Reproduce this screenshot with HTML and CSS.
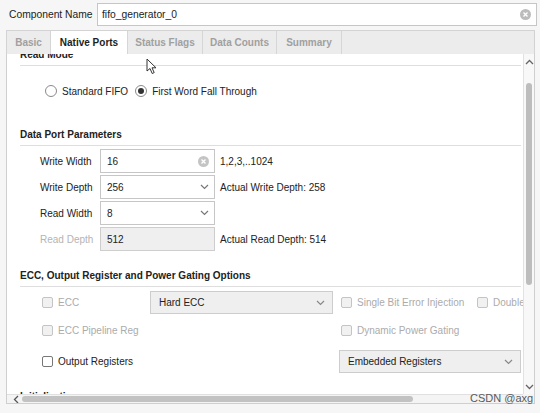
FILE: index.html
```html
<!DOCTYPE html>
<html>
<head>
<meta charset="utf-8">
<link rel="stylesheet" href="styles.css">
</head>
<body>
<div class="app">
  <div class="top">
    <span class="top-label">Component Name</span>
    <div class="field top-field">
      <span class="val">fifo_generator_0</span>
      <svg class="clear" width="11" height="11" viewBox="0 0 11 11"><circle cx="5.5" cy="5.5" r="5.5" fill="#bcbcbc"/><path d="M3.5 3.5 L7.5 7.5 M7.5 3.5 L3.5 7.5" stroke="#fff" stroke-width="1.4"/></svg>
    </div>
  </div>

  <div class="tabs">
    <div class="tab t1">Basic</div>
    <div class="tab t2 active">Native Ports</div>
    <div class="tab t3">Status Flags</div>
    <div class="tab t4">Data Counts</div>
    <div class="tab t5">Summary</div>
  </div>

  <div class="panel">
    <div class="view">
      <div class="content">
        <div class="sec-title">Read Mode</div>
        <div class="radios">
          <span class="radio"></span><span class="rlabel">Standard FIFO</span>
          <span class="radio on"></span><span class="rlabel">First Word Fall Through</span>
        </div>

        <div class="sec-title sec-gap">Data Port Parameters</div>
        <div class="params">
          <span class="plabel">Write Width</span>
          <div class="field pfield"><span class="val">16</span><svg class="clear" width="11" height="11" viewBox="0 0 11 11"><circle cx="5.5" cy="5.5" r="5.5" fill="#c4c4c4"/><path d="M3.5 3.5 L7.5 7.5 M7.5 3.5 L3.5 7.5" stroke="#fff" stroke-width="1.4"/></svg></div>
          <span class="hint">1,2,3,..1024</span>

          <span class="plabel">Write Depth</span>
          <div class="field pfield"><span class="val">256</span><svg class="chev" width="9" height="6" viewBox="0 0 9 6"><polyline points="1,1 4.5,4.5 8,1" fill="none" stroke="#777" stroke-width="1.2"/></svg></div>
          <span class="hint">Actual Write Depth: 258</span>

          <span class="plabel">Read Width</span>
          <div class="field pfield"><span class="val">8</span><svg class="chev" width="9" height="6" viewBox="0 0 9 6"><polyline points="1,1 4.5,4.5 8,1" fill="none" stroke="#777" stroke-width="1.2"/></svg></div>
          <span class="hint"></span>

          <span class="plabel disabled">Read Depth</span>
          <div class="field pfield gray"><span class="val">512</span></div>
          <span class="hint">Actual Read Depth: 514</span>
        </div>

        <div class="sec-title sec-gap2">ECC, Output Register and Power Gating Options</div>
        <div class="ecc">
          <div class="chk-item disabled"><span class="box"></span>ECC</div>
          <div class="field sel gray"><span class="val">Hard ECC</span><svg class="chev" width="9" height="6" viewBox="0 0 9 6"><polyline points="1,1 4.5,4.5 8,1" fill="none" stroke="#888" stroke-width="1.2"/></svg></div>
          <div class="chk-item disabled"><span class="box"></span>Single Bit Error Injection</div>
          <div class="chk-item disabled"><span class="box"></span>Double Bit Error Injection</div>

          <div class="chk-item disabled"><span class="box"></span>ECC Pipeline Reg</div>
          <div></div>
          <div class="chk-item disabled"><span class="box"></span>Dynamic Power Gating</div>
          <div></div>

          <div class="chk-item end"><span class="box"></span>Output Registers</div>
          <div></div>
          <div class="field sel sel2 gray end"><span class="val">Embedded Registers</span><svg class="chev" width="9" height="6" viewBox="0 0 9 6"><polyline points="1,1 4.5,4.5 8,1" fill="none" stroke="#888" stroke-width="1.2"/></svg></div>
          <div></div>
        </div>

        <div class="sec-title sec-gap3">Initialization</div>
      </div>
    </div>
    <div class="vscroll">
      <svg class="arrow" width="9" height="6" viewBox="0 0 9 6"><polyline points="1,5 4.5,1.5 8,5" fill="none" stroke="#666" stroke-width="1.3"/></svg>
      <div class="vthumb"></div>
      <svg class="arrow down" width="9" height="6" viewBox="0 0 9 6"><polyline points="1,1 4.5,4.5 8,1" fill="none" stroke="#666" stroke-width="1.3"/></svg>
    </div>
    <div class="hscroll">
      <svg class="harrow" width="6" height="9" viewBox="0 0 6 9"><polyline points="5,1 1.5,4.5 5,8" fill="none" stroke="#555" stroke-width="1.3"/></svg>
      <div class="hthumb"></div>
    </div>
    <div class="corner"></div>
  </div>

  <div class="watermark">CSDN @axg</div>
  <svg class="cursor" width="12" height="17" viewBox="0 0 12 17"><path d="M1 1 L1 13 L4 10.5 L6.2 15.5 L8.2 14.6 L6 9.8 L10 9.8 Z" fill="#fff" stroke="#333" stroke-width="1" stroke-linejoin="round"/></svg>
</div>
</body>
</html>
```

FILE: styles.css
```css
html, body {
  margin: 0;
  padding: 0;
}
body {
  width: 540px;
  height: 413px;
  overflow: hidden;
  background: #f6f6f6;
  font-family: "Liberation Sans", Arial, sans-serif;
  font-size: 10px;
  color: #222;
}
.app {
  position: relative;
  height: 413px;
}

/* top row */
.top {
  display: flex;
  align-items: center;
  padding: 3px 3px 0 9px;
  height: 22px;
}
.top-label {
  width: 88px;
  font-size: 10.3px;
  color: #222;
}
.field {
  display: flex;
  align-items: center;
  box-sizing: border-box;
  height: 22px;
  border: 1px solid #c6c6c6;
  background: #fff;
  padding: 0 5px 0 6px;
  white-space: nowrap;
}
.field .val {
  flex: 1;
}
.top-field {
  flex: 1;
  height: 23px;
  font-size: 10.3px;
  padding-left: 4px;
}
.clear {
  display: block;
  flex: none;
}
.chev {
  display: block;
  flex: none;
}

/* tabs */
.tabs {
  display: flex;
  margin: 5px 0 0 6px;
  width: 529px;
  height: 24px;
  box-sizing: border-box;
  background: #ececec;
  border: 1px solid #d3d3d3;
  border-bottom: none;
}
.tab {
  box-sizing: border-box;
  display: flex;
  align-items: center;
  justify-content: center;
  border-right: 1px solid #d6d6d6;
  font-weight: bold;
  color: #a0a0a0;
  white-space: nowrap;
}
.tab.active {
  background: #fff;
  color: #1e1e1e;
}
.t1 { width: 44px; }
.t2 { width: 77px; }
.t3 { width: 75px; }
.t4 { width: 74px; }
.t5 { width: 65px; }

/* panel */
.panel {
  margin-left: 6px;
  width: 529px;
  height: 350px;
  box-sizing: border-box;
  border: 1px solid #cfcfcf;
  border-top: none;
  background: #fff;
  display: grid;
  grid-template-columns: 1fr 11px;
  grid-template-rows: 340px 9px;
  overflow: hidden;
}
.view {
  overflow: hidden;
}
.content {
  margin-top: -6px;
  padding: 0 2px 0 13px;
}
.sec-title {
  font-weight: bold;
  line-height: 14px;
  padding-bottom: 3px;
  border-bottom: 1px solid #dedede;
  white-space: nowrap;
}
.sec-gap { margin-top: 29px; }
.sec-gap2 { margin-top: 18px; }
.sec-gap3 { margin-top: 17px; border-bottom: none; }

.radios {
  display: flex;
  align-items: center;
  height: 16px;
  margin-top: 17px;
  padding-left: 25px;
}
.radio {
  width: 12px;
  height: 12px;
  box-sizing: border-box;
  border: 1px solid #8a8a8a;
  border-radius: 50%;
  background: #fff;
  margin-right: 5px;
  position: relative;
}
.radio.on::after {
  content: "";
  position: absolute;
  left: 2px;
  top: 2px;
  width: 6px;
  height: 6px;
  border-radius: 50%;
  background: #333;
}
.rlabel {
  margin-right: 7px;
}

/* data port params */
.params {
  display: grid;
  grid-template-columns: 60px 115px 1fr;
  grid-auto-rows: 24px;
  row-gap: 2px;
  align-items: center;
  margin-top: 3px;
  padding-left: 20px;
}
.plabel {
  color: #222;
}
.plabel.disabled {
  color: #b4b4b4;
}
.pfield {
  height: 24px;
}
.gray {
  background: #efefef;
  border-color: #cdcdcd;
}
.hint {
  padding-left: 5px;
  white-space: nowrap;
}

/* ecc */
.ecc {
  display: grid;
  grid-template-columns: 108px 191px 136px 200px;
  grid-template-rows: 23px 23px 26px;
  row-gap: 5px;
  align-items: center;
  margin-top: 4px;
  padding-left: 22px;
}
.end {
  align-self: end;
}
.chk-item {
  display: flex;
  align-items: center;
  height: 23px;
  white-space: nowrap;
  color: #222;
}
.chk-item.disabled {
  color: #ababab;
}
.box {
  width: 11px;
  height: 11px;
  box-sizing: border-box;
  border: 1px solid #777;
  border-radius: 2px;
  background: #fff;
  margin-right: 5px;
  flex: none;
}
.chk-item.disabled .box {
  border-color: #c4c4c4;
  background: #f1f1f1;
}
.sel {
  width: 183px;
  height: 23px;
  padding: 0 7px 0 8px;
}
.sel2 {
  width: 182px;
  margin-left: -2px;
}

/* scrollbars */
.vscroll {
  background: #f8f8f8;
  border-left: 1px solid #e2e2e2;
  display: flex;
  flex-direction: column;
  align-items: center;
  position: relative;
}
.arrow {
  display: block;
  margin-top: 5px;
}
.vthumb {
  margin-top: 18px;
  width: 6px;
  height: 202px;
  border-radius: 3px;
  background: #bdbdbd;
}
.arrow.down {
  margin-top: auto;
  margin-bottom: 4px;
}
.hscroll {
  background: #f4f4f4;
  border-top: 1px solid #e0e0e0;
  display: flex;
  align-items: center;
  padding-left: 6px;
}
.harrow {
  display: block;
}
.hthumb {
  margin-left: 3px;
  width: 391px;
  height: 6px;
  border-radius: 3px;
  background: #c2c2c2;
}
.corner {
  background: #f4f4f4;
}

/* overlays */
.watermark {
  position: absolute;
  left: 470px;
  top: 392px;
  font-size: 11px;
  color: #5a5a5a;
  white-space: nowrap;
}
.cursor {
  position: absolute;
  left: 146px;
  top: 58px;
}
```
